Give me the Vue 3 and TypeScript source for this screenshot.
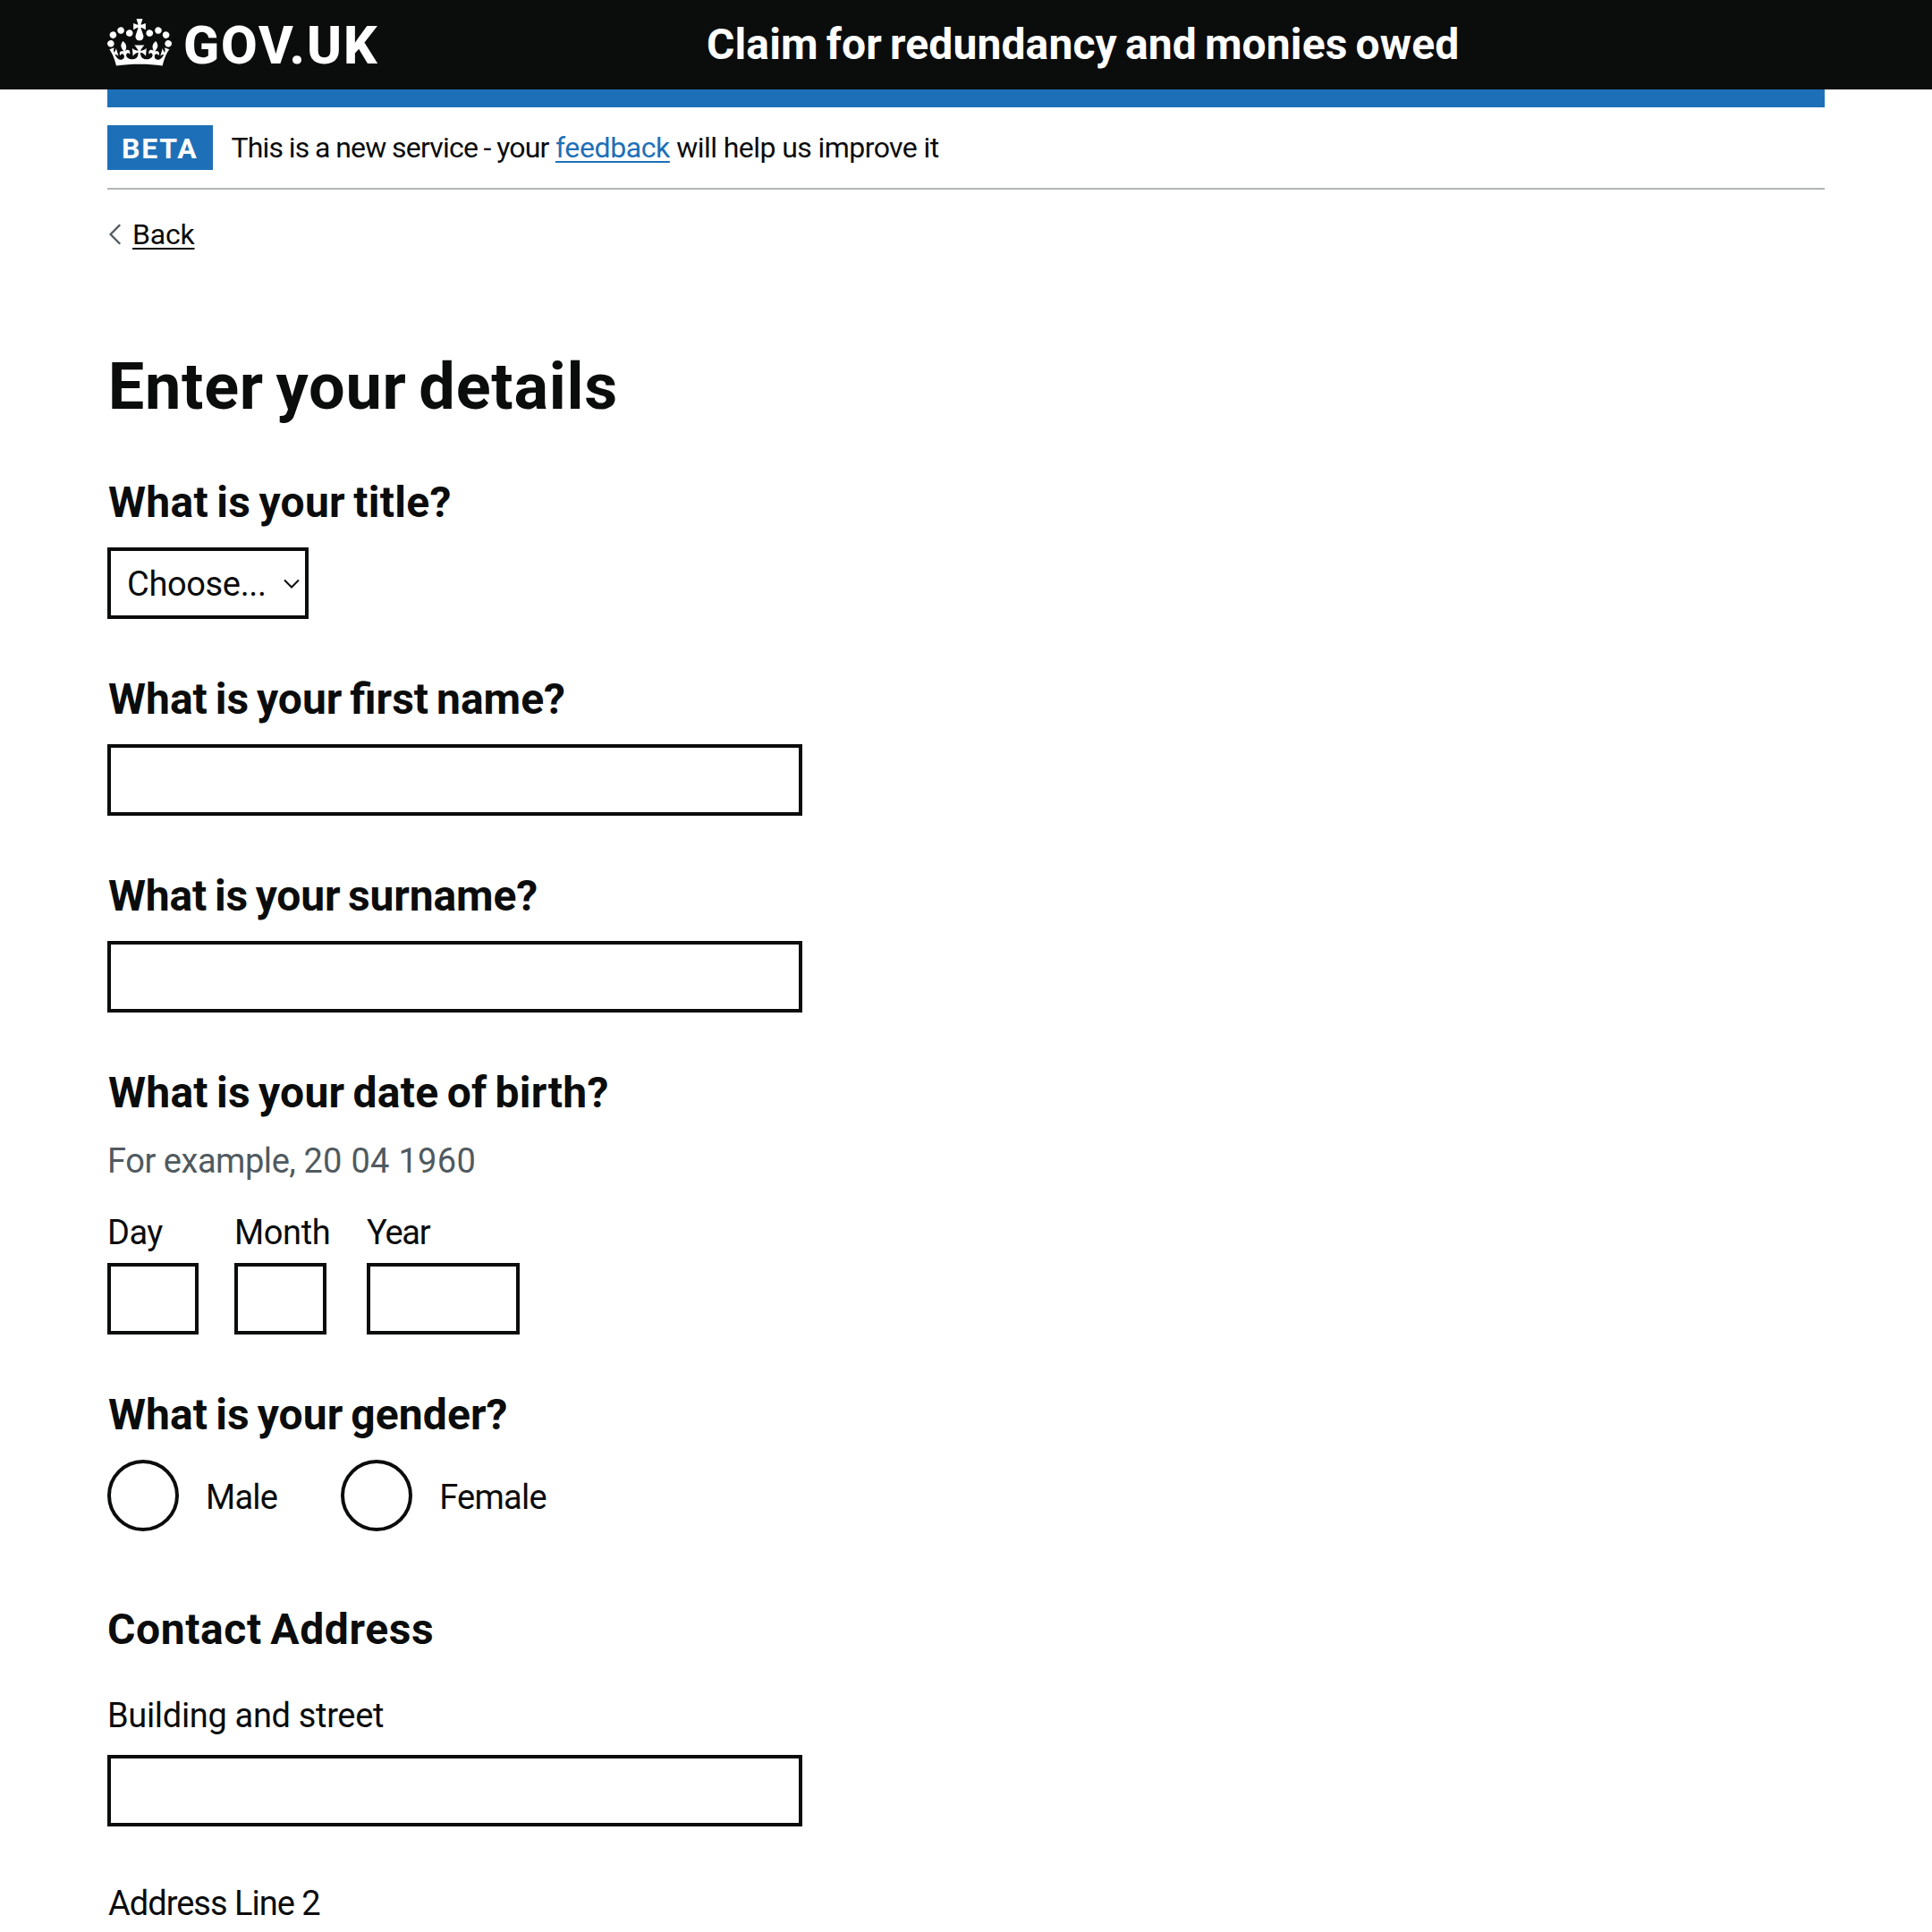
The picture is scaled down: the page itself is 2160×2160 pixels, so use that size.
<script setup lang="ts">
interface Field { label: string; kind: string }

const nameFields: Field[] = [
  { label: 'What is your first name?', kind: 'first-name' },
  { label: 'What is your surname?', kind: 'surname' },
]
const dateFields: Field[] = [
  { label: 'Day', kind: 'day' },
  { label: 'Month', kind: 'month' },
  { label: 'Year', kind: 'year' },
]
const genders: string[] = ['Male', 'Female']
const addressFields: Field[] = [
  { label: 'Building and street', kind: 'street' },
  { label: 'Address Line 2', kind: 'line-2' },
]
</script>

<template>
  <div class="page">
    <header class="header">
      <a class="logo">
        <svg class="crown" viewBox="0 0 132 97" aria-hidden="true">
          <path fill="currentColor" d="M25 30.2c3.5 1.5 7.7-.2 9.1-3.7 1.5-3.6-.2-7.8-3.9-9.2-3.6-1.4-7.6.3-9.1 3.9-1.4 3.5.3 7.5 3.9 9zM9 39.5c3.6 1.5 7.8-.2 9.2-3.7 1.5-3.6-.2-7.8-3.9-9.1-3.6-1.5-7.6.2-9.1 3.8-1.4 3.5.3 7.5 3.8 9zM4.4 57.2c3.5 1.5 7.7-.2 9.1-3.8 1.5-3.6-.2-7.7-3.9-9.1-3.5-1.5-7.6.3-9.1 3.8-1.4 3.5.3 7.6 3.9 9.1zm38.3-21.4c3.5 1.5 7.7-.2 9.1-3.8 1.5-3.6-.2-7.7-3.9-9.1-3.6-1.5-7.6.3-9.1 3.8-1.3 3.6.4 7.7 3.9 9.1zm64.4-5.6c-3.6 1.5-7.8-.2-9.1-3.7-1.5-3.6.2-7.8 3.8-9.2 3.6-1.4 7.7.3 9.2 3.9 1.3 3.5-.4 7.5-3.9 9zm15.9 9.3c-3.6 1.5-7.7-.2-9.1-3.7-1.5-3.6.2-7.8 3.7-9.1 3.6-1.5 7.7.2 9.2 3.8 1.5 3.5-.3 7.5-3.8 9zm4.7 17.7c-3.6 1.5-7.8-.2-9.2-3.8-1.5-3.6.2-7.7 3.9-9.1 3.6-1.5 7.7.3 9.2 3.8 1.3 3.5-.4 7.6-3.9 9.1zM89.3 35.8c-3.6 1.5-7.8-.2-9.2-3.8-1.4-3.6.2-7.7 3.9-9.1 3.6-1.5 7.7.3 9.2 3.8 1.4 3.6-.3 7.7-3.9 9.1zM69.7 17.7l8.9 4.7V9.3l-8.9 2.8c-.2-.3-.5-.6-.9-.9L72.4 0H59.6l3.5 11.2c-.3.3-.6.5-.9.9l-8.8-2.8v13.1l8.8-4.7c.3.3.6.7.9.9l-5 15.4v.1c-.2.8-.4 1.6-.4 2.4 0 4.1 3.1 7.5 7 8.1h.2c.3 0 .7.1 1 .1.4 0 .7 0 1-.1h.2c4-.6 7.1-4.1 7.1-8.1 0-.8-.1-1.7-.4-2.4V34l-5.1-15.4c.4-.2.7-.6 1-.9zM66 92.8c16.9 0 32.8 1.1 47.1 3.2 4-16.9 8.9-26.7 14-33.5l-9.6-3.4c1 4.9 1.1 7.2 0 10.2-1.5-1.4-3-4.3-4.2-8.7L108.6 76c2.8-2 5-3.2 7.5-3.3-4.4 9.4-10 11.9-13.6 11.2-4.3-.8-6.3-4.6-5.6-7.9 1-4.7 5.7-5.9 8-.5 4.3-8.7-3-11.4-7.6-8.8 7.1-7.2 7.9-13.5 2.1-21.1-8 6.1-8.1 12.3-4.5 20.8-4.7-5.4-12.1-2.5-9.5 6.2 3.4-5.2 7.9-2 7.2 3.1-.6 4.3-6.4 7.8-13.5 7.2-10.3-.9-10.9-8-11.2-13.8 2.5-.5 7.1 1.8 11 7.3L80.2 60c-4.1 4.4-8 5.3-12.3 5.4 1.4-4.4 8-11.6 8-11.6H55.5s6.4 7.2 7.9 11.6c-4.2-.1-8-1-12.3-5.4l1.4 16.4c3.9-5.5 8.5-7.7 10.9-7.3-.3 5.8-.9 12.8-11.1 13.8-7.2.6-12.9-2.9-13.5-7.2-.7-5 3.8-8.3 7.1-3.1 2.7-8.7-4.6-11.6-9.4-6.2 3.7-8.5 3.6-14.7-4.6-20.8-5.8 7.6-5 13.9 2.2 21.1-4.7-2.6-11.9.1-7.7 8.8 2.3-5.5 7.1-4.2 8.1.5.7 3.3-1.3 7.1-5.7 7.9-3.5.7-9-1.8-13.5-11.2 2.5.1 4.7 1.3 7.5 3.3l-4.7-15.4c-1.2 4.4-2.7 7.2-4.3 8.7-1.1-3-.9-5.3 0-10.2l-9.5 3.4c5 6.9 9.9 16.7 14 33.5 14.8-2.1 30.8-3.2 47.7-3.2z" />
        </svg>
        <span class="logotype">GOV.UK</span>
      </a>
      <span class="service">Claim for redundancy and monies owed</span>
    </header>

    <div class="container">
      <div class="bar"></div>
      <div class="phase">
        <strong class="tag">BETA</strong>
        <span class="phase-text"><span class="phase-start">This is a new service - your</span> <a class="link">feedback</a> will help us improve it</span>
      </div>
      <a class="back">
        <svg class="back-arrow" viewBox="0 0 14 24" aria-hidden="true"><path d="M12.2 1.3L1.6 12l10.6 10.7" /></svg>
        <span class="back-text">Back</span>
      </a>

      <main>
        <h1>Enter your details</h1>
        <div class="group">
          <label class="label title">What is your title?</label>
          <div class="select">
            <span>Choose...</span>
            <svg viewBox="0 0 18 12" aria-hidden="true"><path d="M1 1.5l8 8 8-8" /></svg>
          </div>
        </div>
        <div v-for="f in nameFields" :key="f.kind" class="group">
          <label class="label" :class="f.kind">{{ f.label }}</label>
          <input class="input" type="text" />
        </div>
        <div class="group">
          <div class="label birth">What is your date of birth?</div>
          <div class="hint">For example, <span class="digits">20 04 1960</span></div>
          <div class="date">
            <div v-for="f in dateFields" :key="f.kind" class="date-item" :class="f.kind">
              <label class="body">{{ f.label }}</label>
              <input class="input" type="text" />
            </div>
          </div>
        </div>
        <div class="group gender">
          <div class="label">What is your gender?</div>
          <div class="radios">
            <label v-for="g in genders" :key="g" class="radio"><span class="circle"></span><span class="body">{{ g }}</span></label>
          </div>
        </div>
        <h2 class="label contact">Contact Address</h2>
        <div v-for="f in addressFields" :key="f.kind" class="group address" :class="f.kind">
          <label class="body">{{ f.label }}</label>
          <input class="input" type="text" />
        </div>
      </main>
    </div>
  </div>
</template>

<style>
body { margin: 0; background: #fff; }
</style>

<style scoped>
.page { height: 2160px; overflow: hidden; font-family: Roboto, "Liberation Sans", sans-serif; font-size: 38px; color: #0b0c0c; background: #fff; }
.header { display: flex; align-items: center; height: 100px; padding: 0 120px; background: #0b0c0c; color: #fff; }
.logo { display: flex; align-items: center; width: 670px; color: #fff; }
.crown { display: block; width: 72px; height: 53px; margin-bottom: 5px; }
.logotype { margin: 2px 0 0 13px; font-size: 59px; font-weight: 800; line-height: 70px; letter-spacing: 1.9px; }
.service { font-size: 48px; font-weight: 700; line-height: 60px; letter-spacing: .12px; word-spacing: -3px; white-space: nowrap; }
.container { margin: 0 120px; }
.bar { height: 20px; background: #1d70b8; }
.phase { display: flex; padding: 20px 0; border-bottom: 2px solid #b1b4b6; font-size: 32px; line-height: 50px; }
.tag { box-sizing: border-box; width: 118px; height: 50px; padding: 1px 0 0 16px; background: #1d70b8; color: #fff; font-weight: 700; letter-spacing: 1.8px; }
.phase-text { margin-left: 20.5px; letter-spacing: -.57px; white-space: nowrap; }
.phase-start { letter-spacing: -.8px; word-spacing: -.6px; }
.link { color: #1d70b8; letter-spacing: -.4px; text-decoration: underline; text-decoration-thickness: 2px; text-underline-offset: 4px; text-decoration-skip-ink: none; }
.back { display: flex; width: max-content; height: 40px; margin: 30px 0 110px; line-height: 40px; font-size: 32px; }
.back-arrow { width: 14px; height: 24px; margin: 8px 12px 0 2px; fill: none; stroke: #505a5f; stroke-width: 2.3; }
.back-text { letter-spacing: -.2px; text-decoration: underline; text-decoration-thickness: 2px; text-underline-offset: 4px; text-decoration-skip-ink: none; }
h1 { margin: 0; padding: 1px 0 59px .7px; font-size: 72px; line-height: 80px; font-weight: 700; letter-spacing: .76px; word-spacing: -5px; }
.group { display: flex; flex-direction: column; align-items: flex-start; margin-bottom: 60px; }
.label { margin: 0 0 20px; padding-left: 1px; font-size: 48px; line-height: 60px; font-weight: 700; letter-spacing: .08px; word-spacing: -3px; }
.title { letter-spacing: .3px; }
.first-name { letter-spacing: 0; }
.surname { letter-spacing: -.17px; }
.birth { letter-spacing: .25px; }
.input { box-sizing: border-box; display: block; width: 777px; height: 80px; margin: 0; padding: 0 10px; border: 4px solid #0b0c0c; border-radius: 0; background: #fff; outline: none; }
.select { box-sizing: border-box; display: flex; align-items: center; justify-content: space-between; width: 225px; height: 80px; padding: 2px 6px 0 18px; border: 4px solid #0b0c0c; letter-spacing: -.35px; }
.select svg { width: 18px; height: 12px; margin-bottom: 1px; fill: none; stroke: #0b0c0c; stroke-width: 2; }
.hint { padding-top: 1px; margin-bottom: 29px; line-height: 50px; letter-spacing: -.45px; color: #505a5f; }
.digits { letter-spacing: .3px; }
.body { padding-top: 1px; font-size: 38px; line-height: 50px; }
.date { display: flex; }
.date-item { display: flex; flex-direction: column; gap: 9px; }
.day { width: 142px; letter-spacing: -.5px; }
.day .input { width: 102px; }
.month { width: 148px; letter-spacing: -.4px; }
.month .input { width: 103px; }
.year { letter-spacing: -1.2px; }
.year .input { width: 171px; }
.gender { margin-bottom: 80px; }
.radios { display: flex; gap: 71px; }
.radio { display: flex; align-items: center; height: 80px; letter-spacing: -.75px; }
.circle { box-sizing: border-box; width: 80px; height: 80px; margin-right: 30px; border: 4px solid #0b0c0c; border-radius: 50%; }
.radio .body { padding-top: 3px; }
.contact { margin-bottom: 40px; padding-left: 0; letter-spacing: .6px; }
.address .body { margin-bottom: 19px; }
.street .body { letter-spacing: -.33px; }
.line-2 .body { padding-left: 1px; letter-spacing: -1px; }
</style>
